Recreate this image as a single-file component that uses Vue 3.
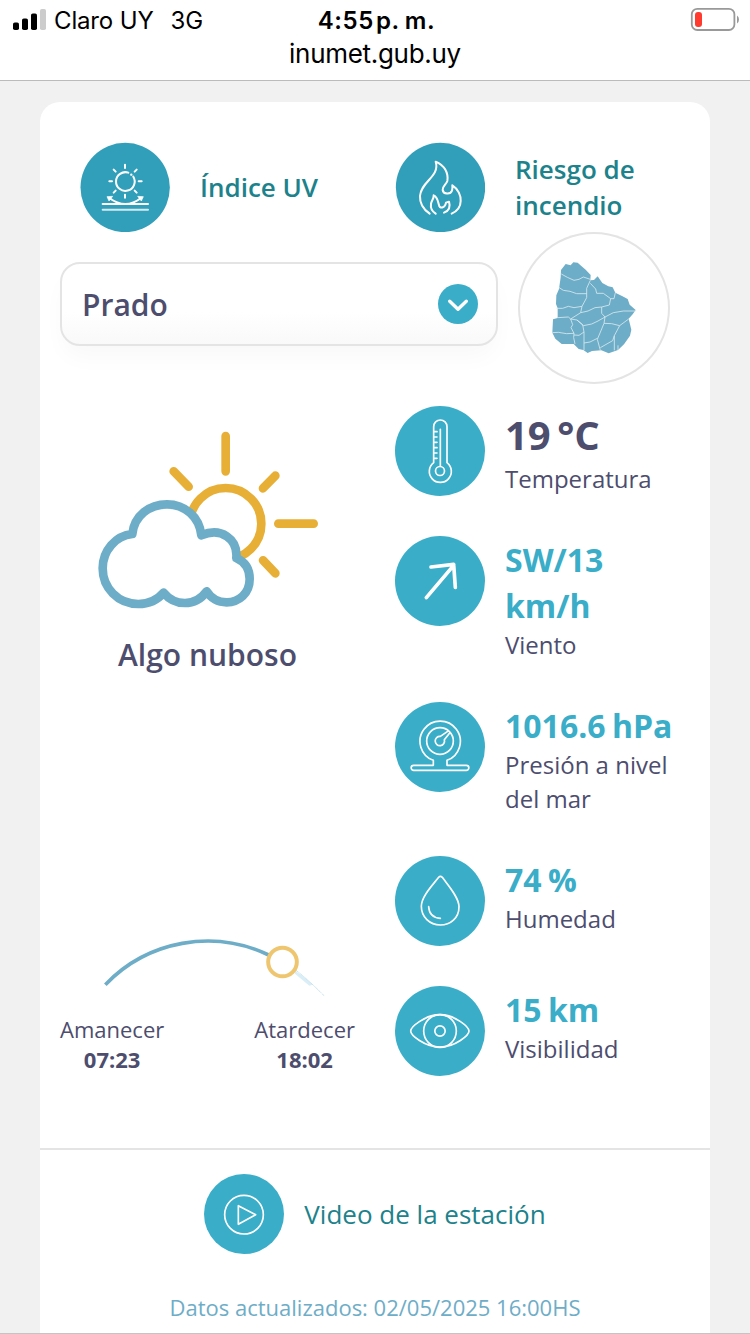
<script setup>
const metrics = [
  { id: 'temp', value: '19 °C', label: 'Temperatura', box: '45 48 270 270' },
  { id: 'wind', value: 'SW/13 km/h', label: 'Viento', box: '45 438 270 270' },
  { id: 'pressure', value: '1016.6 hPa', label: 'Presión a nivel del mar', box: '45 36 270 270' },
  { id: 'humidity', value: '74 %', label: 'Humedad', box: '45 498 270 270' },
  { id: 'visibility', value: '15 km', label: 'Visibilidad', box: '45 48 270 270' },
]
</script>

<template>
  <div class="screen">
    <header class="status-bar">
      <div class="status-row">
        <div class="carrier">
          <svg class="signal" viewBox="0 0 34 22">
            <rect x="0" y="13.5" width="6" height="7.5" rx="1.8" />
            <rect x="9" y="9.5" width="6" height="11.5" rx="1.8" />
            <rect x="18" y="4.5" width="6" height="16.5" rx="1.8" />
            <rect x="27" y="0" width="6" height="21" rx="1.8" fill="#ccc" />
          </svg>
          <span class="carrier-name">Claro UY</span>
          <span class="network">3G</span>
        </div>
        <span class="clock">4:55<span class="ampm">p. m.</span></span>
        <svg class="battery" viewBox="0 0 50 26">
          <rect x="1.8" y="1.8" width="42.6" height="21.2" rx="5.5" fill="none" stroke="#999" stroke-width="1.8" />
          <rect x="5" y="5" width="7" height="15" rx="3" fill="#ff3b30" />
          <path d="M47 8.5q2 1.6 2 4t-2 4z" fill="#999" />
        </svg>
      </div>
      <div class="url">inumet.gub.uy</div>
    </header>

    <main class="card">
      <nav class="links">
        <a class="link">
          <svg class="link-icon" viewBox="60 36 270 270">
            <circle cx="195.5" cy="172.5" r="134" fill="#319fba" />
            <g fill="none" stroke="#fff" stroke-width="6" stroke-linecap="round">
              <path d="M205 128A28 28 0 1 0 220 140" />
              <path d="M195 104v10M195 194v9M148 154h8M236 154h9M161 119l6 6M230 119l-6 6M161 188l6-6M230 188l-6-6" />
              <path d="M148 204q24 18 48 18t47-18M128 222h136" />
              <path d="M128 239h136" stroke="#d4ecf1" />
            </g>
            <circle cx="214" cy="134" r="3.5" fill="#fff" />
            <path d="M141 200l17-1-11 14zM250 200l-17-1 11 14z" fill="#fff" stroke="#fff" stroke-width="2" />
          </svg>
          <span>Índice UV</span>
        </a>
        <a class="link">
          <svg class="link-icon" viewBox="45 36 270 270">
            <circle cx="181.5" cy="172.5" r="134" fill="#319fba" />
            <g fill="none" stroke="#fff" stroke-width="6" stroke-linecap="round" stroke-linejoin="round">
              <path d="M149 251C127 236 119 219 120 198C122 155 181 140 167 95C193 106 206 128 202 153C199 163 187 169 188 180C190 193 211 195 216 182Q218 173 217 166C235 177 243 198 242 213C242 229 232 243 215 251" />
              <path d="M167 251C156 244 151 234 153 222C154 211 162 207 161 196C174 202 173 214 177 225C178 237 195 235 198 218L207 215C212 231 206 243 192 248" />
            </g>
          </svg>
          <span>Riesgo de incendio</span>
        </a>
      </nav>

      <div class="picker">
        <div class="select">
          <span>Prado</span>
          <svg class="chevron" viewBox="0 0 40 40">
            <circle cx="20" cy="20" r="20" fill="#3aadc8" />
            <path d="M11.7 17.2l8.3 8 8.3-8" fill="none" stroke="#fff" stroke-width="3.4" stroke-linecap="round" stroke-linejoin="round" />
          </svg>
        </div>
        <div class="map">
          <svg viewBox="294 6 456 456">
            <path
              d="M437 102L452 106 460 97 473 98 484 108 497 119 512 135 511 151 522 150 533 139 547 159 565 169 578 172 586 188 606 198 623 207 629 224 647 240 638 253 626 266 634 299 630 317 612 343 594 360 566 370 544 361 516 363 503 369 490 360 476 357 461 342 425 342 406 326 397 308 399 268 413 264 413 235 408 222 409 196 417 177 422 142 423 120z"
              fill="#6eadc7"
            />
            <g class="borders">
              <path d="M424 132L442 142 462 151 477 148 490 141 511 148" />
              <path d="M416 172L430 181 450 184 470 191 500 191M511 151L500 175 500 203 486 229 482 248" />
              <path d="M409 235L428 235 445 229 462 233 486 229" />
              <path d="M511 160L527 177 530 190 550 190 572 206 568 225 545 231 545 250 555 261" />
              <path d="M586 188L582 206 572 206M647 243L610 243 580 248 555 261 534 273 515 282 490 287 471 270 452 267 445 261 413 263" />
              <path d="M452 267L482 248 504 243 525 233 545 231" />
              <path d="M452 267L458 284 453 293 462 310 461 323 465 342M397 308L415 307 440 311 462 310" />
              <path d="M471 270L488 284 492 306 492 360M462 315L477 316 492 306" />
              <path d="M555 261L552 280 540 309 532 328 541 361M492 339L510 336 532 325" />
              <path d="M552 280L575 281 599 287 626 267M599 287L583 317 578 332 541 353M583 317V361M594 346v14" />
            </g>
          </svg>
        </div>
      </div>

      <div class="weather">
        <section class="summary">
          <svg class="sky" viewBox="0 0 765 600">
            <g fill="none" stroke="#e8af37" stroke-width="26" stroke-linecap="round">
              <circle cx="437" cy="311" r="107" />
              <path d="M437 48v106M281 154l45 46M586 167l-37 38M595 311h106M549 421l37 39" />
            </g>
            <path
              d="M157 342C163 286 209 253 261 253C314 253 358 290 364 346C423 321 474 356 469 414C496 426 509 449 509 477C509 521 476 547 440 547C413 547 393 535 380 514C364 536 342 549 315 549C289 549 268 539 251 518C234 538 208 552 175 552C114 552 68 504 68 445C68 391 107 347 157 342Z"
              fill="#fff"
              stroke="#6eadc7"
              stroke-width="26"
              stroke-linejoin="round"
            />
          </svg>
          <h2>Algo nuboso</h2>

          <div class="sun">
            <svg viewBox="120 0 765 270">
              <path d="M765 152Q790 168 818 194L808 197Q785 178 765 161z" fill="#d9eef7" />
              <path d="M768 151Q800 175 852 227" fill="none" stroke="#8cc3d9" stroke-width="2" stroke-dasharray="3 2" />
              <path d="M196 194A425 425 0 0 1 686 105" fill="none" stroke="#6eadc7" stroke-width="11" />
              <circle cx="727.5" cy="126" r="43" fill="#fff" stroke="#efc670" stroke-width="12" />
            </svg>
            <div class="sun-times">
              <div>Amanecer<b>07:23</b></div>
              <div>Atardecer<b>18:02</b></div>
            </div>
          </div>
        </section>

        <ul class="metrics">
          <li v-for="m in metrics" :key="m.id" :class="['metric', m.id]">
            <svg class="metric-icon" :viewBox="m.box">
              <g v-if="m.id === 'temp'">
                <path d="M161 218V110a19.500 19.500 0 0 1 40 0V218A33 33 0 1 1 161 218z" />
                <path d="M181 118V228M163 125h8M163 141h8M163 157h8M163 173h8M163 189h8M163 205h8" />
                <circle cx="180" cy="243" r="13.500" />
              </g>
              <g v-else-if="m.id === 'wind'" class="thick">
                <path d="M139 623L221 526M153 531L221 523 226 592" />
              </g>
              <g v-else-if="m.id === 'pressure'">
                <path d="M160 226V211A60.500 60.500 0 1 1 201 211V226H259a7 7 0 0 1 0 15H101a7 7 0 0 1 0-15z" />
                <circle cx="180" cy="153" r="40" />
                <path d="M203 124L181 139A14 14 0 1 0 193 149L209 129" />
              </g>
              <g v-else-if="m.id === 'humidity'">
                <path d="M176 562Q181 556 187 562C205 587 237 622 237 650C237 684 211 705 181 705C149 705 124 681 124 649C124 620 158 585 176 562Z" />
                <path d="M146 650C147 670 160 683 181 685" />
              </g>
              <g v-else>
                <path d="M92 183C92 171 135 134 180 134S267 171 267 183S227 231 180 231S92 195 92 183Z" />
                <circle cx="180" cy="183" r="49" />
                <circle cx="180" cy="183" r="15.500" />
              </g>
            </svg>
            <div class="metric-text">
              <strong>{{ m.value }}</strong>
              <span>{{ m.label }}</span>
            </div>
          </li>
        </ul>
      </div>

      <footer class="card-footer">
        <a class="video">
          <svg viewBox="0 0 240 240">
            <g fill="none" stroke="#fff" stroke-width="5" stroke-linejoin="round">
              <circle cx="120" cy="122" r="58" />
              <path d="M103 95V151L155 122z" />
            </g>
          </svg>
          <span>Video de la estación</span>
        </a>
        <p class="updated">Datos actualizados: 02/05/2025 16:00HS</p>
      </footer>
    </main>
  </div>
</template>

<style>
body { margin: 0; background: #f0f0f0; }
</style>

<style scoped>
* { box-sizing: border-box; }
.screen {
  width: 750px; height: 1334px; overflow: hidden;
  display: flex; flex-direction: column;
  background: #f1f1f1; border-bottom: 1px solid #c4c4c4;
  font-family: 'Open Sans', 'Noto Sans', sans-serif; color: #4d4d6e;
}

.status-bar { height: 81px; flex: none; background: #fff; border-bottom: 1px solid #bbb; color: #000; font-family: Inter, sans-serif; }
.status-row { display: grid; grid-template-columns: 1fr auto 1fr; align-items: center; height: 40px; padding: 0 10px 0 13px; }
.carrier { display: flex; align-items: center; font-size: 24px; letter-spacing: -0.15px; line-height: 28px; }
.carrier span { padding-top: 1px; }
.signal { width: 34px; height: 22px; margin-right: 7px; }
.network { margin-left: 17px; }
.clock { padding-top: 1px; font-size: 24px; font-weight: 600; letter-spacing: 0.6px; }
.ampm { margin-left: 2px; word-spacing: -1px; }
.battery { width: 50px; height: 26px; justify-self: end; }
.url { text-align: center; font-size: 26px; line-height: 28px; letter-spacing: -0.3px; }

.card { width: 670px; flex: 1; margin: 21px auto 0; background: #fff; border-radius: 20px 20px 0 0; }

.links { display: grid; grid-template-columns: 315px 1fr; height: 130px; padding: 40px 40px 0; }
.link { display: flex; align-items: center; gap: 30px; height: 90px; font-size: 26px; line-height: 36px; font-weight: 600; color: #1c828b; }
.link-icon { width: 90px; height: 90px; flex: none; }

.picker { display: flex; align-items: flex-start; gap: 20px; padding: 0 20px; }
.select {
  display: flex; align-items: center; justify-content: space-between;
  width: 438px; height: 84px; margin-top: 30px; padding: 0 18px 0 20px;
  border: 2px solid #e4e4e4; border-radius: 20px;
  background: linear-gradient(#fff 60%, #f9f9f9);
  box-shadow: 0 14px 24px -4px rgba(0, 0, 0, 0.03);
  font-size: 30px; font-weight: 600;
}
.chevron { width: 40px; height: 40px; }
.map { width: 152px; height: 152px; background: #fff; border-radius: 50%; box-shadow: inset 0 0 0 2px #e4e4e4; }
.map svg { display: block; width: 152px; height: 152px; }
.borders path { fill: none; stroke: #dcecf2; stroke-width: 2.4; }

.weather { display: grid; grid-template-columns: 295px 1fr; gap: 40px; height: 764px; padding: 22px 20px 72px; }
.summary { display: flex; flex-direction: column; align-items: center; padding: 14px 0 2px; }
.sky { width: 255px; height: 200px; }
h2 { margin: 14px 0 0; font-size: 30px; line-height: 42px; font-weight: 600; }
.sun { width: 100%; margin-top: auto; text-align: center; }
.sun svg { width: 255px; height: 90px; display: block; margin: 0 auto 4px; }
.sun-times { display: flex; justify-content: space-between; font-size: 22px; line-height: 30px; }
.sun-times b { display: block; }

.metrics { display: flex; flex-direction: column; gap: 40px; margin: 0; padding: 0; list-style: none; }
.metric { display: flex; gap: 20px; min-height: 90px; }
.metric-icon { width: 90px; height: 90px; flex: none; border-radius: 50%; background: #3aadc8; }
.metric-icon g { fill: none; stroke: #fff; stroke-width: 5; stroke-linecap: round; stroke-linejoin: round; }
.metric-icon g.thick { stroke-width: 11; }
.metric-text { width: 175px; }
.metric-text strong { display: block; height: 46px; padding-top: 1px; font-size: 32px; line-height: 46px; font-weight: 700; word-spacing: -2px; color: #3aadc8; }
.metric-text span { display: block; font-size: 24px; line-height: 34px; }
.temp strong { height: 56px; font-size: 40px; line-height: 56px; word-spacing: -4px; color: #4d4d6e; }
.wind strong { height: 92px; }

.card-footer { border-top: 2px solid #e4e4e4; padding-top: 24px; }
.video { display: flex; align-items: center; justify-content: center; gap: 20px; font-size: 26px; color: #1c828b; }
.video svg { width: 80px; height: 80px; border-radius: 50%; background: #3aadc8; }
.updated { margin: 38px 0 0; text-align: center; font-size: 22px; line-height: 30px; color: #6eadc7; }
</style>
